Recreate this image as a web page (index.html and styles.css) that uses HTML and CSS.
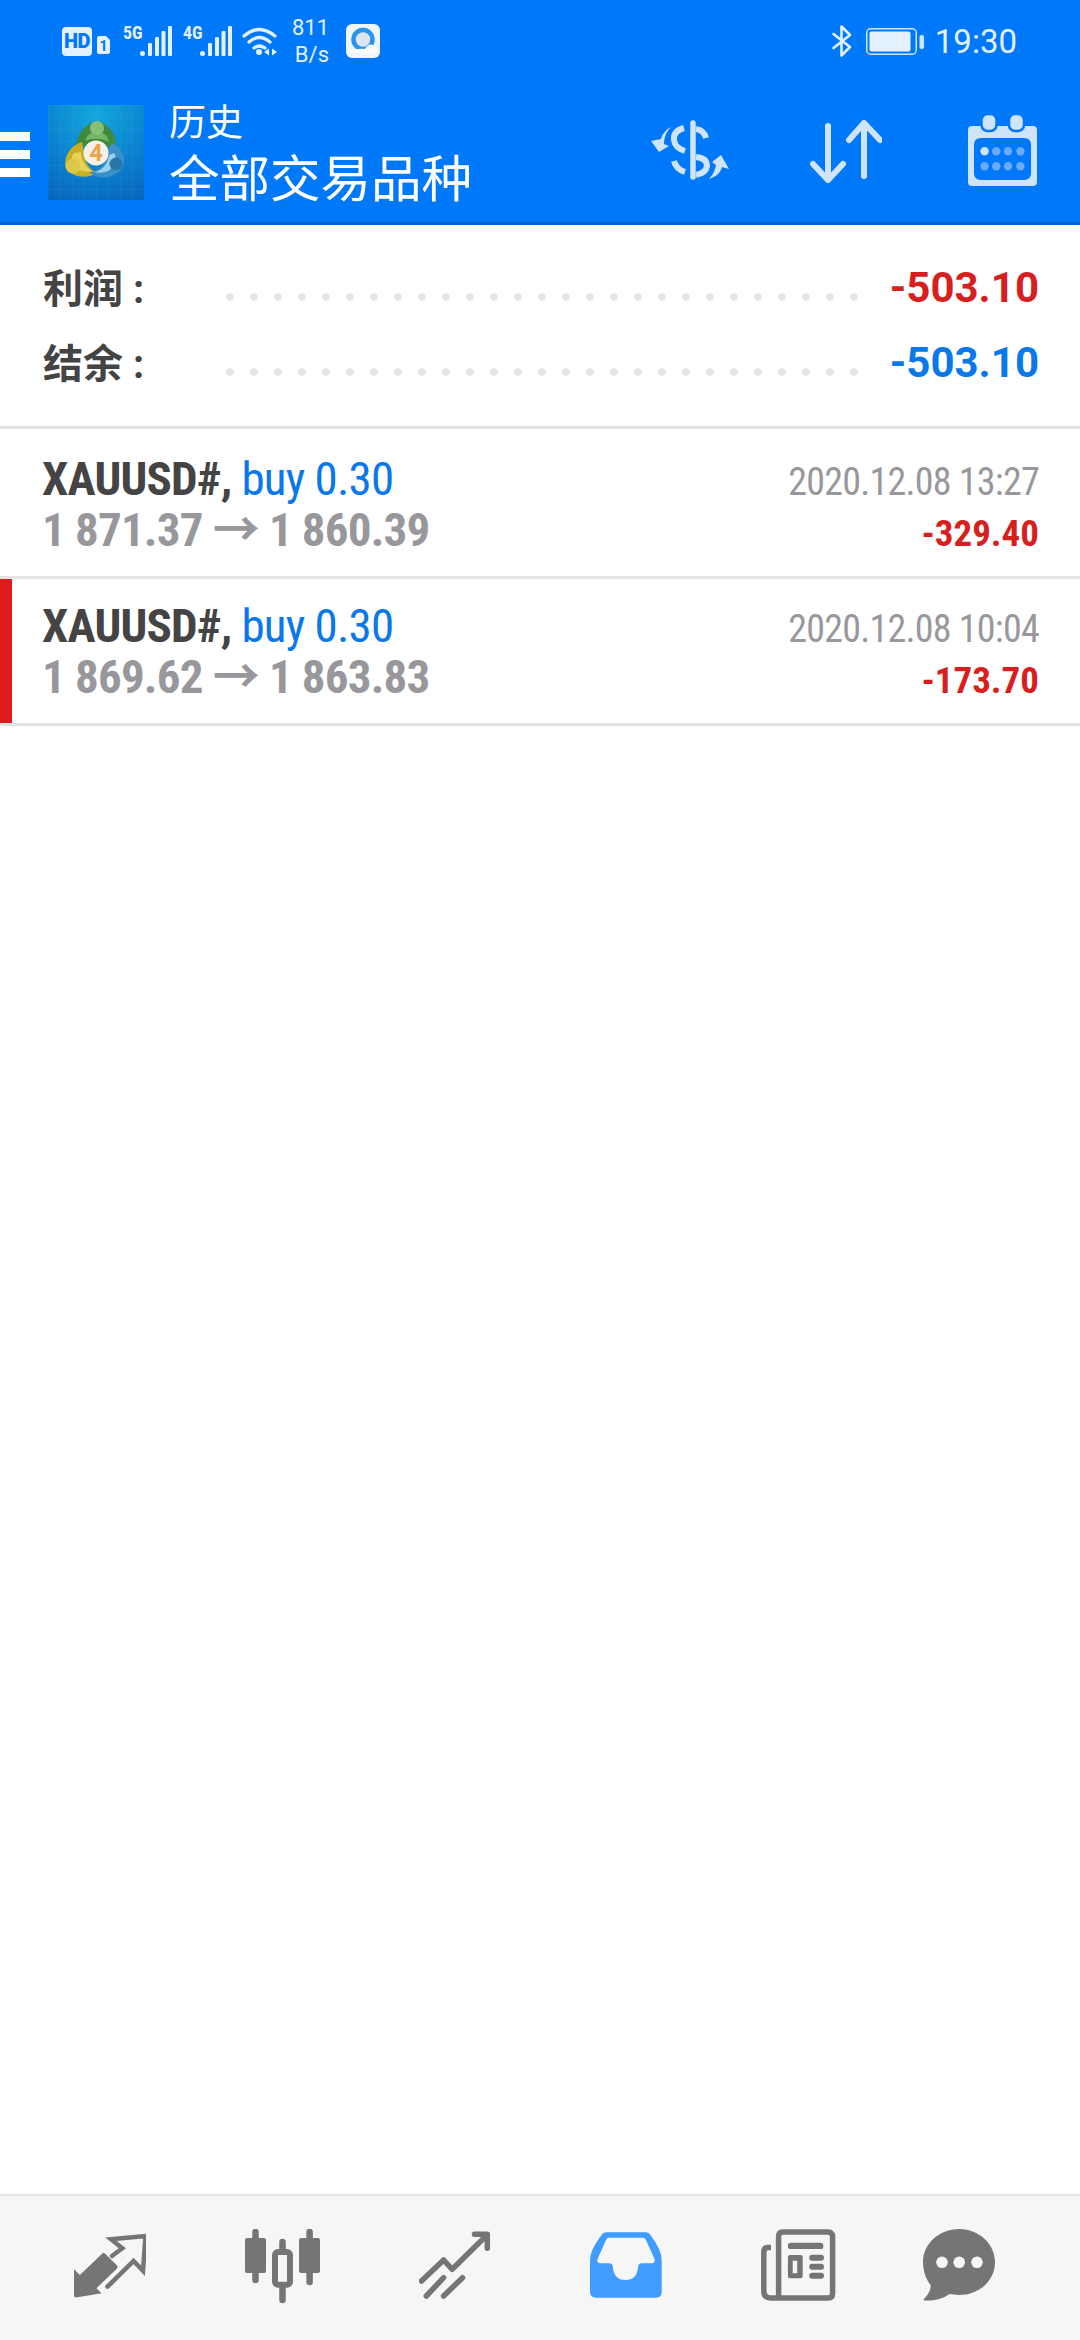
FILE: index.html
```html
<!DOCTYPE html>
<html lang="zh-CN">
<head>
    <meta charset="UTF-8">
    <meta name="viewport" content="width=device-width, initial-scale=1.0">
    <title>历史</title>
    <link rel="stylesheet" href="styles.css">
</head>
<body>
    <header class="topbar">
        <!-- Phone status bar -->
        <div class="status-bar">
            <span class="hd-badge">HD</span>
            <svg class="sim-icon" width="13" height="18" viewBox="0 0 13 18"><path d="M2 0H9L13 4V16Q13 18 11 18H2Q0 18 0 16V2Q0 0 2 0Z" fill="#e3f0ff"/><text x="6.5" y="14.5" text-anchor="middle" class="sim-num">1</text></svg>
            <div class="signal signal-first">
                <span class="net-type">5G</span>
                <svg width="32" height="30" viewBox="0 0 32 30"><g fill="#e3f0ff"><circle cx="2.5" cy="27.5" r="2.5"/><rect x="8" y="17" width="4" height="13" rx="1"/><rect x="15" y="11" width="4" height="19" rx="1"/><rect x="21.500" y="5" width="4" height="25" rx="1"/><rect x="28" y="0" width="4" height="30" rx="1"/></g></svg>
            </div>
            <div class="signal">
                <span class="net-type">4G</span>
                <svg width="32" height="30" viewBox="0 0 32 30"><g fill="#e3f0ff"><circle cx="2.5" cy="27.5" r="2.5"/><rect x="8" y="17" width="4" height="13" rx="1"/><rect x="15" y="11" width="4" height="19" rx="1"/><rect x="21.500" y="5" width="4" height="25" rx="1"/><rect x="28" y="0" width="4" height="30" rx="1"/></g></svg>
            </div>
            <svg class="wifi-icon" width="37" height="30" viewBox="0 0 37 30">
                <g fill="none" stroke="#e3f0ff" stroke-width="3.2" stroke-linecap="round">
                    <path d="M2 10Q17 -3 33 10"/>
                    <path d="M7 16Q17 7 28 16"/>
                    <path d="M12 22Q17 18 23 22"/>
                </g>
                <circle cx="17" cy="26" r="3" fill="#e3f0ff"/>
                <path d="M22 26L27 22.500V29.500ZM30 22.500V29.500L35 26Z" fill="#e3f0ff"/>
            </svg>
            <div class="net-speed">
                <span>811</span>
                <span>B/s</span>
            </div>
            <svg class="qq-icon" width="34" height="34" viewBox="0 0 34 34">
                <rect width="34" height="34" rx="6" fill="#eef5fd"/>
                <circle cx="17" cy="15.500" r="9.500" fill="#dde6ef" stroke="#2a93ea" stroke-width="4.500"/>
                <path d="M3 27Q12 24 19 25Q22 19 27 21Q32 23 31 29Q18 32 3 27Z" fill="#f8fbfe"/>
            </svg>
            <svg class="bt-icon" width="20" height="32" viewBox="0 0 20 32"><path d="M1.500 9L18 22L9.500 30.500V1.500L18 10L1.500 23" fill="none" stroke="#e3f0ff" stroke-width="2.600" stroke-linejoin="round" stroke-linecap="round"/></svg>
            <svg class="battery-icon" width="58" height="27" viewBox="0 0 58 27">
                <rect x=".75" y=".75" width="49.500" height="25.500" rx="4" fill="none" stroke="#cfe3fb" stroke-width="1.500"/>
                <rect x="3.500" y="3.500" width="41" height="20" rx="2" fill="#e3f0ff"/>
                <rect x="53.500" y="7" width="4.500" height="14" rx="2" fill="#cfe3fb"/>
            </svg>
            <span class="clock">19:30</span>
        </div>

        <!-- App bar -->
        <div class="app-bar">
            <div class="menu-btn"><i></i><i></i><i></i></div>
            <svg class="app-logo" width="96" height="95" viewBox="0 0 96 95">
                <defs>
                    <radialGradient id="logoBg" cx=".5" cy=".1" r="1">
                        <stop offset="0" stop-color="#12a8dc"/>
                        <stop offset=".55" stop-color="#0b82d0"/>
                        <stop offset="1" stop-color="#0766bc"/>
                    </radialGradient>
                    <pattern id="logoGrid" width="12" height="12" patternUnits="userSpaceOnUse">
                        <path d="M12 0H0V12" fill="none" stroke="#ffffff" stroke-opacity=".06" stroke-width="1"/>
                    </pattern>
                </defs>
                <rect width="96" height="95" fill="url(#logoBg)"/>
                <rect width="96" height="95" fill="url(#logoGrid)"/>
                <path d="M29 46C26 31 37 19 49 16C61 19 71 31 67 47C60 37 38 36 29 46Z" fill="#3f8a3c"/>
                <path d="M37 36C39 30 43 27 49 27C56 27 60 31 61 37C54 33 44 33 37 36Z" fill="#74b565"/>
                <circle cx="49" cy="23" r="7" fill="#86c078"/>
                <path d="M34 37C22 41 15 52 18 63C24 73 40 74 50 68C41 65 36 56 36 47Z" fill="#c9ad22"/>
                <path d="M26 48C22 53 23 60 31 65C37 67 41 67 44 66C37 62 33 55 33 47Z" fill="#e6d35a"/>
                <circle cx="25" cy="61" r="7.500" fill="#dcc94a"/>
                <path d="M64 38C74 43 79 54 74 63C66 74 50 75 41 67C50 68 58 60 59 47Z" fill="#3c90c8"/>
                <path d="M66 48C70 54 67 62 60 66C55 68 50 68 46 67C53 66 60 60 61 50Z" fill="#9ad0ee"/>
                <circle cx="68" cy="59" r="6.500" fill="#2a76a8"/>
                <circle cx="48" cy="48" r="12.500" fill="#f6f1e6"/>
                <text x="48" y="56" text-anchor="middle" class="logo-num">4</text>
            </svg>
            <div class="titles">
                <div class="title-small">历史</div>
                <div class="title-big">全部交易品种</div>
            </div>
            <div class="tools">
                <svg class="tool-dollar" width="79" height="60" viewBox="0 0 79 60">
                    <g fill="none" stroke="#cfe3fb" stroke-width="5.500" stroke-linecap="round">
                        <path d="M42 3V57"/>
                    </g>
                    <g fill="none" stroke="#cfe3fb" stroke-width="6">
                        <path d="M33 8Q22 11 23 20Q24 28 34 31"/>
                        <path d="M45 9Q53 10 55 18"/>
                        <path d="M45 37Q56 38 56 46Q55 53 45 55"/>
                        <path d="M23 41Q25 49 34 52"/>
                    </g>
                    <g fill="#cfe3fb">
                        <path d="M20 7C14 10 11 15 10 19L0 21L8 32L18 26L13 24C13 18 15 12 20 7Z"/>
                        <path d="M58 59C65 57 70 52 71 47L78 49L70 35L61 42L65 45C64 50 62 55 58 59Z"/>
                    </g>
                </svg>
                <svg class="tool-sort" width="72" height="66" viewBox="0 0 72 66">
                    <path d="M18 7V61M3 45L18 61L33 45M54 5V57M39 21L54 4L70 21" fill="none" stroke="#cfe3fb" stroke-width="6" stroke-linecap="round" stroke-linejoin="round"/>
                </svg>
                <svg class="tool-calendar" width="69" height="71" viewBox="0 0 69 71">
                    <path d="M4 11H65Q69 11 69 15V67Q69 71 65 71H4Q0 71 0 67V15Q0 11 4 11ZM13 23Q6 23 6 30V58Q6 65 13 65H56Q63 65 63 58V30Q63 23 56 23Z" fill="#cfe3fb" fill-rule="evenodd"/>
                    <g fill="#cfe3fb" stroke="#0078fa" stroke-width="2.500">
                        <rect x="13.500" y="-1" width="15" height="17" rx="6"/>
                        <rect x="41" y="-1" width="15" height="17" rx="6"/>
                    </g>
                    <circle cx="16.600" cy="36.300" r="4.200" fill="#cfe3fb"/>
                    <g fill="#6aaaf8">
                        <circle cx="28.300" cy="36.300" r="4.200"/>
                        <circle cx="40" cy="36.300" r="4.200"/>
                        <circle cx="52.400" cy="36.300" r="4.200"/>
                        <circle cx="16.600" cy="51.300" r="4.200"/>
                        <circle cx="28.300" cy="51.300" r="4.200"/>
                        <circle cx="40" cy="51.300" r="4.200"/>
                        <circle cx="52.400" cy="51.300" r="4.200"/>
                    </g>
                </svg>
            </div>
        </div>
    </header>

    <main class="history">
        <section class="summary">
            <div class="summary-row">
                <span class="summary-label">利润 :</span>
                <span class="dots"></span>
                <span class="summary-value loss">-503.10</span>
            </div>
            <div class="summary-row">
                <span class="summary-label">结余 :</span>
                <span class="dots"></span>
                <span class="summary-value blue">-503.10</span>
            </div>
        </section>

        <div class="deal deal-first">
            <div class="deal-left">
                <div class="deal-name"><b>XAUUSD#,</b> <span class="blue">buy 0.30</span></div>
                <div class="deal-price">1 871.37 <span class="arrow">&rarr;</span> 1 860.39</div>
            </div>
            <div class="deal-right">
                <div class="deal-time">2020.12.08 13:27</div>
                <div class="deal-profit loss">-329.40</div>
            </div>
        </div>
        <div class="deal deal-marked">
            <div class="deal-left">
                <div class="deal-name"><b>XAUUSD#,</b> <span class="blue">buy 0.30</span></div>
                <div class="deal-price">1 869.62 <span class="arrow">&rarr;</span> 1 863.83</div>
            </div>
            <div class="deal-right">
                <div class="deal-time">2020.12.08 10:04</div>
                <div class="deal-profit loss">-173.70</div>
            </div>
        </div>
    </main>

    <!-- Bottom tabs -->
    <nav class="tabs">
        <svg width="72" height="75" viewBox="0 -5 72 75">
            <path d="M0 35.300L5.900 41L28.600 19.300Q30 18.500 31 19.500L43 31.500Q44 33 43 34.500L22.400 54.300L27.600 59.300L2 63.500Q0 63.500 0 61Z" fill="#757575"/>
            <path d="M38 22L48.300 14.300L37 5.300L71.500 2L69 36.700L59.600 27L33.500 52.700" fill="none" stroke="#757575" stroke-width="4.500" stroke-linecap="round"/>
        </svg>
        <svg width="75" height="75" viewBox="0 0 75 75">
            <g fill="#757575">
                <rect x="0" y="9" width="21" height="35" rx="2"/>
                <rect x="54" y="9" width="21" height="35" rx="2"/>
            </g>
            <rect x="30" y="23" width="15" height="32.700" rx="3" fill="none" stroke="#757575" stroke-width="6"/>
            <path d="M10.500 3V51M64.600 3V53M37.500 13V20M37.500 59V71" stroke="#757575" stroke-width="6.500" stroke-linecap="round"/>
        </svg>
        <svg width="72" height="75" viewBox="0 -2 72 75">
            <path d="M2.500 50L24.600 29L33.200 38.300L67 5M55.500 3.300H68.300V17.300M7.300 65L24.600 46.700M24.600 65L43.500 46.700" fill="none" stroke="#757575" stroke-width="5.500" stroke-linecap="round" stroke-linejoin="round"/>
        </svg>
        <svg width="72" height="75" viewBox="0 -3 72 75">
            <path d="M16 .3H56Q59 .3 60.500 3Q71.700 18 71.700 28V60Q71.700 65.700 66 65.700H6Q0 65.700 0 60V28Q0 18 11.500 3Q13 .3 16 .3ZM19 5.700Q17 5.700 16 8L7.600 27Q6.500 31.300 10 31.300H19Q22.800 31.300 22.800 35Q24 48 35.500 48Q47 48 48.200 35Q48.200 31.300 52 31.300H61Q65.500 31.300 64.500 27L56 8Q55 5.700 53 5.700Z" fill="#409cff" fill-rule="evenodd"/>
        </svg>
        <svg width="75" height="75" viewBox="0 0 75 75">
            <path d="M10 18.500H7Q2.800 18.500 2.800 23V62Q2.800 69 10 69H67Q71.600 69 71.600 64.500V7.500Q71.600 3 67 3H22Q17.600 3 17.600 7.500V69" fill="none" stroke="#757575" stroke-width="5.500"/>
            <g fill="#757575">
                <rect x="26.900" y="13.700" width="35.500" height="6.400" rx="3.200"/>
                <path d="M29 26H39.700Q41.700 26 41.700 28V47.300Q41.700 49.300 39.700 49.300H29Q26.900 49.300 26.900 47.300V28Q26.900 26 29 26ZM31.700 31.700V44.300H36.200V31.700Z" fill-rule="evenodd"/>
                <rect x="48.200" y="25.700" width="14.800" height="6" rx="3"/>
                <rect x="48.200" y="34.700" width="14.800" height="6" rx="3"/>
                <rect x="48.200" y="43.700" width="14.800" height="6" rx="3"/>
            </g>
        </svg>
        <svg class="tab-chat" width="72" height="75" viewBox="0 0 72 75">
            <path d="M36 0C56 0 72 15 72 33C72 52 56 66 36 66C33 66 29 65 26.500 65C20 70 10 72 1.500 71.500Q0 71 1 70C5 66 8 61 7.600 56C3 50 0 42 0 33C0 15 16 0 36 0Z" fill="#757575"/>
            <g fill="#f6f6f6">
                <circle cx="19" cy="33.300" r="5.800"/>
                <circle cx="36.200" cy="33.300" r="5.800"/>
                <circle cx="54" cy="33.300" r="5.800"/>
            </g>
        </svg>
    </nav>
</body>
</html>
```

FILE: styles.css
```css
* {
    box-sizing: border-box;
}

html, body {
    margin: 0;
    height: 2340px;
}

body {
    display: flex;
    flex-direction: column;
    background: #ffffff;
    font-family: Roboto, "Noto Sans CJK SC", sans-serif;
    overflow: hidden;
}

.blue {
    color: #0a78e8;
}

.loss {
    color: #d71f1f;
}

/* top */
.topbar {
    background: #0078fa;
    border-bottom: 3px solid #0064d0;
    height: 225px;
}

.status-bar {
    display: flex;
    align-items: center;
    height: 82px;
    padding: 0 63px 0 62px;
    color: #e3f0ff;
}

.hd-badge {
    width: 30px;
    height: 29px;
    border-radius: 4px;
    background: #e3f0ff;
    color: #0078fa;
    font-size: 20px;
    font-weight: 900;
    line-height: 29px;
    letter-spacing: -.5px;
    text-align: center;
}

.sim-icon {
    margin: 8px 0 0 5px;
}

.sim-num {
    font: 700 14px Roboto, sans-serif;
    fill: #0078fa;
}

.signal {
    display: flex;
    align-items: flex-start;
    margin-left: 11px;
}

.signal-first {
    margin-left: 13px;
}

.net-type {
    width: 17px;
    font-size: 18px;
    font-weight: 700;
    font-stretch: 75%;
    line-height: 14px;
}

.wifi-icon {
    margin-left: 10px;
}

.net-speed {
    display: flex;
    flex-direction: column;
    align-items: flex-end;
    margin: 0 0 0 14px;
    width: 36px;
    font-size: 22px;
    line-height: 27px;
}

.qq-icon {
    margin-left: 17px;
}

.bt-icon {
    margin-left: auto;
}

.battery-icon {
    margin-left: 14px;
}

.clock {
    margin-left: 11px;
    font-size: 33px;
}

.app-bar {
    display: flex;
    align-items: center;
    height: 140px;
    padding-right: 43px;
}

.menu-btn {
    display: flex;
    flex-direction: column;
    gap: 9px;
    width: 30px;
    margin-top: 4px;
}

.menu-btn i {
    display: block;
    height: 9px;
    background: #ffffff;
}

.app-logo {
    margin-left: 18px;
}

.logo-num {
    font: 700 23px Roboto, sans-serif;
    fill: #eba24a;
}

.titles {
    margin: 9px 0 0 25px;
    color: #ffffff;
}

.title-small {
    font-size: 37px;
    line-height: 44px;
}

.title-big {
    margin-top: 3px;
    font-size: 50.5px;
    line-height: 62px;
}

.tools {
    display: flex;
    align-items: center;
    gap: 80px;
    margin-left: auto;
}

.tool-dollar {
    margin-bottom: 4px;
}

.tool-calendar {
    margin-left: 6px;
    margin-bottom: 3px;
}

/* summary */
.history {
    flex: 1;
}

.summary {
    height: 204px;
    padding-top: 26px;
    border-bottom: 3px solid #e3e3e3;
}

.summary-row {
    display: grid;
    grid-template-columns: 175px 648px 1fr;
    align-items: center;
    height: 75px;
    padding: 0 41px 0 43px;
}

.summary-label {
    margin-bottom: 6px;
    color: #444444;
    font-size: 40px;
    font-weight: 700;
    white-space: nowrap;
}

.dots {
    height: 8px;
    margin-top: 16px;
    background: radial-gradient(circle at 12px 4px, #e4e4e4 3.5px, transparent 4px) 0 0 / 24px 8px repeat-x;
}

.summary-value {
    margin-bottom: 2px;
    font-size: 42px;
    font-weight: 700;
    text-align: right;
}

/* deals */
.deal {
    display: flex;
    justify-content: space-between;
    height: 147px;
    padding: 21px 41px 0 42px;
    border-bottom: 3px solid #e3e3e3;
}

.deal-first {
    height: 150px;
    padding-top: 24px;
}

.deal-marked {
    background: linear-gradient(#e01b1e, #e01b1e) 0 0 / 12px 100% no-repeat;
}

.deal-left {
    width: 500px;
}

.deal-name,
.deal-price {
    font-size: 47px;
    line-height: 51px;
    letter-spacing: -.8px;
    white-space: nowrap;
    font-stretch: 75%;
}

.deal-name b {
    color: #444444;
}

.deal-price {
    color: #98989c;
    font-weight: 700;
}

.deal-right {
    margin-top: 4px;
    text-align: right;
}

.deal-time,
.deal-profit {
    white-space: nowrap;
    line-height: 51px;
    font-stretch: 75%;
}

.deal-time {
    color: #98989c;
    font-size: 38px;
    letter-spacing: -.75px;
}

.deal-profit {
    font-size: 37px;
    font-weight: 700;
}

/* bottom */
.tabs {
    display: flex;
    gap: 99px;
    height: 146px;
    padding: 33px 0 0 74px;
    border-top: 2px solid #e3e3e3;
    background: #f6f6f6;
}

.tab-chat {
    margin-left: -12px;
}
```
